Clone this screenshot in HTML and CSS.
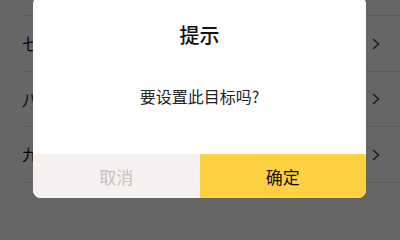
FILE: index.html
```html
<!DOCTYPE html>
<html lang="zh-CN">
<head>
<meta charset="utf-8">
<link rel="stylesheet" href="styles.css">
</head>
<body>
<div class="list">
  <div class="row"><span class="label">七</span><svg class="chev" viewBox="0 0 8 12" width="8" height="12"><polyline points="1,1 6.5,6 1,11" /></svg></div>
  <div class="row"><span class="label">八</span><svg class="chev" viewBox="0 0 8 12" width="8" height="12"><polyline points="1,1 6.5,6 1,11" /></svg></div>
  <div class="row"><span class="label">九</span><svg class="chev" viewBox="0 0 8 12" width="8" height="12"><polyline points="1,1 6.5,6 1,11" /></svg></div>
</div>
<div class="mask"></div>
<div class="dialog">
  <div class="title">提示</div>
  <div class="message">要设置此目标吗?</div>
  <div class="actions">
    <div class="btn cancel">取消</div>
    <div class="btn confirm">确定</div>
  </div>
</div>
</body>
</html>
```
FILE: styles.css
```css
html, body {
  margin: 0;
  padding: 0;
  width: 400px;
  height: 200px;
  overflow: hidden;
  background: #ffffff;
  font-family: "Noto Sans CJK SC", "Noto Sans", sans-serif;
}
.list {
  margin-top: 15px;
  margin-left: 22px;
  border-top: 1px solid #e4e4e4;
}
.row {
  height: 55.5px;
  box-sizing: border-box;
  border-bottom: 1px solid #e4e4e4;
  display: flex;
  align-items: center;
  justify-content: space-between;
  padding-right: 20px;
  font-size: 16px;
  color: #111;
}
.chev {
  fill: none;
  stroke: #3a3a3a;
  stroke-width: 1.4;
  margin-top: 1px;
}
.mask {
  position: absolute;
  inset: 0;
  background: rgba(0, 0, 0, 0.6);
}
.dialog {
  position: absolute;
  left: 33px;
  top: -4px;
  width: 333px;
  height: 202px;
  background: #fff;
  border-radius: 8px;
  overflow: hidden;
  display: flex;
  flex-direction: column;
}
.title {
  margin-top: 25px;
  height: 28px;
  line-height: 28px;
  text-align: center;
  font-size: 20px;
  font-weight: 500;
  color: #111;
}
.message {
  margin-top: 35px;
  height: 24px;
  line-height: 24px;
  text-align: center;
  font-size: 16px;
  color: #222;
  flex: 1;
}
.actions {
  display: flex;
  height: 44px;
}
.btn {
  flex: 1;
  display: flex;
  align-items: center;
  justify-content: center;
  font-size: 17px;
}
.cancel {
  background: #f6f1f1;
  color: #c6c0c0;
}
.confirm {
  background: #ffd042;
  color: #111;
}
```
